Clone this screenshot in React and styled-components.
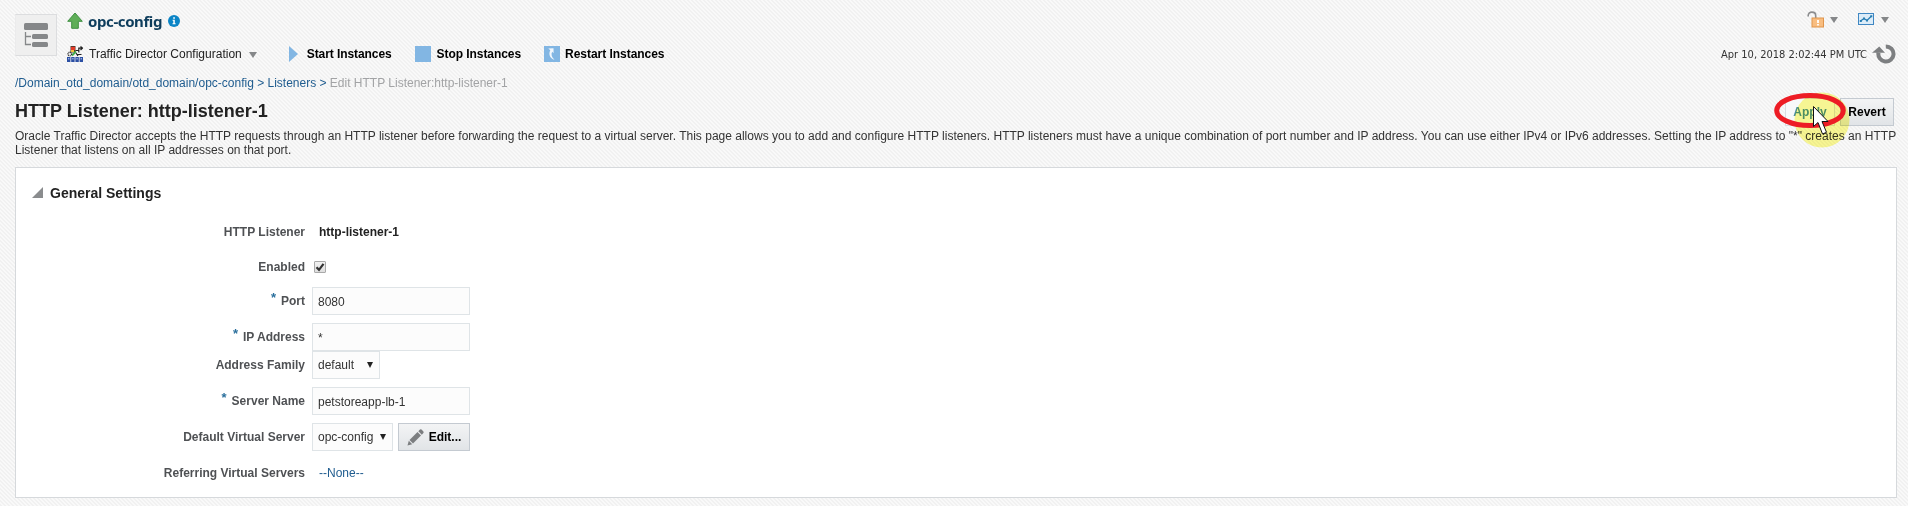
import React from "react";
import styled, { createGlobalStyle, css } from "styled-components";

const Global = createGlobalStyle`
  * { box-sizing: border-box; }
  html, body { margin: 0; height: 100%; }
  body {
    background-color: #f7f7f7;
    background-image: linear-gradient(45deg, #f9f9f9 25%, #f1f1f1 25% 50%, #f9f9f9 50% 75%, #f1f1f1 75%);
    background-size: 4px 4px;
    font-family: "Liberation Sans", Arial, sans-serif;
    font-size: 12px;
    color: #333;
  }
`;

const tracking = css`
  letter-spacing: ${(p) => p.$track || 0}px;
`;

const Page = styled.div`
  width: 1908px;
  height: 506px;
  padding: 0 11px 8px 15px;
  overflow: hidden;
  position: relative;
  display: flex;
  flex-direction: column;
`;

const Header = styled.header`
  display: flex;
  height: 73px;
  padding-top: 14px;
`;

const NavButton = styled.button`
  width: 42px;
  height: 42px;
  padding: 0;
  border: 1px solid #dcdddf;
  border-left-color: #ebebec;
  background: #efefef;
  display: grid;
  place-items: center;
  margin-right: 10px;
`;

const Target = styled.div`
  flex: 1;
  margin-top: -5px;
`;

const TitleRow = styled.div`
  height: 24px;
  display: flex;
  align-items: center;
`;

const TargetName = styled.h1`
  margin: 0 6px 0 5px;
  font: bold 15px "Noto Sans", sans-serif;
  line-height: 24px;
  color: #0e3d5c;
  ${tracking}
`;

const MenuBar = styled.nav`
  display: flex;
  align-items: center;
  height: 20px;
  margin-top: 11px;
`;

const MenuLabel = styled.span`
  margin: 0 7px 0 6px;
  color: #222;
`;

const Action = styled.span`
  display: flex;
  align-items: center;
  gap: ${(p) => p.$gap}px;
  margin-left: ${(p) => p.$left}px;
  font-weight: bold;
  color: #000;
  white-space: nowrap;
  ${tracking}
`;

const Tools = styled.div`
  display: flex;
  flex-direction: column;
  align-items: flex-end;
  margin-top: -6px;
`;

const ToolIcons = styled.div`
  display: flex;
  align-items: center;
  height: 22px;
  padding-right: 8px;
`;

const Stamp = styled.div`
  display: flex;
  align-items: center;
  gap: 5px;
  height: 22px;
  margin-top: 13px;
  padding-right: 1px;
  font: 11px "DejaVu Sans Condensed", "DejaVu Sans", sans-serif;
  color: #333;
`;

const Caret = styled.span`
  border: 4.5px solid transparent;
  border-top: 6px solid #858789;
  border-bottom: 0;
  margin-left: ${(p) => p.$left || 0}px;
  margin-right: ${(p) => p.$right || 0}px;
  position: relative;
  top: 1px;
`;

const Crumbs = styled.div`
  height: 20px;
  line-height: 20px;
  color: #1f5c8f;
  white-space: nowrap;
`;

const Current = styled.span`
  color: #a2a3a5;
`;

const HeadingRow = styled.div`
  display: flex;
  justify-content: space-between;
  height: 36px;
  padding: 5px 3px 0 0;
`;

const Heading = styled.h2`
  margin: 0;
  font-size: 18px;
  line-height: 26px;
  color: #222;
  ${tracking}
`;

const Buttons = styled.div`
  display: flex;
  gap: 5px;
`;

const Button = styled.button`
  height: 28px;
  width: ${(p) => p.$w}px;
  padding: 0;
  border: 1px solid ${(p) => (p.$hot ? "#d9dce0" : "#c4cad1")};
  background: ${(p) => (p.$hot ? "#f8f9fa" : "linear-gradient(#f3f4f5, #e1e4e7)")};
  font: bold 12px "Liberation Sans", Arial, sans-serif;
  color: ${(p) => (p.$hot ? "#4d90a8" : "#000")};
  display: flex;
  align-items: center;
  justify-content: center;
  gap: 5px;
  ${tracking}
`;

const Description = styled.p`
  margin: 0;
  height: 38px;
  line-height: 14px;
  white-space: nowrap;
  color: #333;
  ${tracking}
`;

const Panel = styled.section`
  height: 331px;
  border: 1px solid #d6d9dc;
  background: #fff;
  padding: 15px 16px 0;
`;

const PanelTitle = styled.h3`
  margin: 0;
  display: flex;
  align-items: center;
  gap: 7px;
  height: 20px;
  font-size: 14px;
  color: #222;
`;

const Disclosure = styled.span`
  border-left: 11px solid transparent;
  border-bottom: 11px solid #8a8c8e;
  margin-bottom: 1px;
`;

const Field = styled.div`
  display: grid;
  grid-template-columns: 273px auto;
  column-gap: 7px;
  align-items: center;
  justify-content: start;
  height: 28px;
  margin-top: ${(p) => p.$top}px;
`;

const Label = styled.label`
  text-align: right;
  font-weight: bold;
  color: #4f5154;
`;

const Required = styled.span`
  color: #2a6f9c;
  margin-right: 5px;
  font-size: 13px;
  line-height: 12px;
  position: relative;
  top: -3px;
`;

const box = css`
  height: 28px;
  border: 1px solid #dfe4e7;
  background: #fcfcfc;
  color: #333;
  font: 12px "Liberation Sans", Arial, sans-serif;
`;

const Input = styled.input`
  ${box}
  width: 158px;
  padding: 1px 5px 0;
`;

const Select = styled.div`
  ${box}
  width: ${(p) => p.$w}px;
  padding: 0 6px 0 5px;
  display: flex;
  align-items: center;
  justify-content: space-between;
`;

const SelectArrow = styled.span`
  border: 3px solid transparent;
  border-top: 6px solid #222;
  border-bottom: 0;
`;

const Controls = styled.div`
  display: flex;
  gap: 5px;
`;

const Value = styled.span`
  padding-left: 7px;
  font-weight: ${(p) => (p.$link ? "normal" : "bold")};
  color: ${(p) => (p.$link ? "#1f5c8f" : "#222")};
`;

const Check = styled.span`
  width: 12px;
  height: 12px;
  margin-left: 2px;
  border: 1px solid #a9a9a9;
  background: linear-gradient(#f2f2f2, #dedede);
  border-radius: 1px;
  display: grid;
  place-items: center;
`;

const PointerOverlay = styled.svg`
  position: absolute;
  left: 1768px;
  top: 86px;
  pointer-events: none;
  mix-blend-mode: ${(p) => p.$blend || "normal"};
`;

const HierarchyIcon = () => (
  <svg width="26" height="26" viewBox="0 0 26 26" fill="#858789">
    <rect x="1" y="1" width="24" height="7" rx="1.5" />
    <rect x="9" y="12" width="16" height="5" rx="1.5" />
    <rect x="9" y="20" width="16" height="5" rx="1.5" />
    <path d="M2.5 10v12.5H8M2.5 14.5H8" fill="none" stroke="#858789" strokeWidth="1.3" />
  </svg>
);

const UpArrow = () => (
  <svg width="16" height="18" viewBox="0 0 16 18">
    <path d="M8 1L15.3 9.3H11.3V16.3H4.7V9.3H.7Z" fill="#5fae58" stroke="#3f8f42" strokeLinejoin="round" />
  </svg>
);

const InfoIcon = () => (
  <svg width="12" height="12" viewBox="0 0 12 12">
    <circle cx="6" cy="6" r="6" fill="#0b84c6" />
    <path d="M5.2 2.3h1.7v1.5H5.2zM4.6 4.8h2.2v3.5h.8v1H4.5v-1h.8V5.8h-.7z" fill="#fff" />
  </svg>
);

const TrafficIcon = () => (
  <svg width="16" height="16" viewBox="0 0 16 16">
    <rect x="3.500" y="0" width="5" height="6.500" fill="#5a3a30" />
    <rect x="4" y="1" width="4" height="3" fill="#e23a26" />
    <rect x="4" y="4" width="3" height="2" fill="#f0c23a" />
    <path d="M5 9.500L9 5.500" stroke="#3fae49" strokeWidth="1.800" />
    <circle cx="2.8" cy="8" r="1.8" fill="none" stroke="#333" strokeWidth="1.3" strokeDasharray="1 .6" />
    <path d="M8.500 4.500h3M11.800 6.500V2.200h3.200M10 8.500h4.500M13.500 .5L15.500 2.200 13.500 4M9 7l2 3" fill="none" stroke="#222" strokeWidth="1.2" />
    <g fill="#2b4fa3">
      <rect x="0" y="11" width="3.400" height="5" />
      <rect x="4.200" y="11" width="3.400" height="5" />
      <rect x="8.400" y="11" width="3.400" height="5" />
      <rect x="12.600" y="11" width="3.400" height="5" />
    </g>
    <path d="M1 12.800h1.400M5.200 12.800h1.400M9.400 12.800h1.400M13.600 12.800H15" stroke="#c9d6f2" />
  </svg>
);

const StartIcon = () => (
  <svg width="9" height="16" viewBox="0 0 9 16"><path d="M0 0L9 8 0 16Z" fill="#82b6e3" /></svg>
);

const StopIcon = () => (
  <svg width="16" height="16"><rect width="16" height="16" fill="#82b6e3" /></svg>
);

const RestartIcon = () => (
  <svg width="16" height="16" viewBox="0 0 16 16">
    <rect width="16" height="16" fill="#82b6e3" />
    <path d="M4.300 2.600L9.500 2.200 9.600 7.200 8.200 5.800C6.800 8 7.600 11.500 10.500 13.700 5.900 12.500 4.200 8 6.300 4.200Z" fill="#f2f7fc" />
  </svg>
);

const LockIcon = () => (
  <svg width="17" height="17" viewBox="0 0 17 17">
    <path d="M1.200 5.500V4.500C1.200 0 8.700 0 8.700 4.500V7" fill="none" stroke="#8c8d8f" strokeWidth="1.600" />
    <rect x="5" y="7" width="11.500" height="9" fill="#f8bd80" stroke="#e0954c" />
    <path d="M11 9v3M11 13v1.500" stroke="#fff" strokeWidth="1.800" />
  </svg>
);

const ChartIcon = () => (
  <svg width="16" height="12" viewBox="0 0 16 12">
    <rect x=".5" y=".5" width="15" height="11" fill="#dcecf8" stroke="#3f87c3" />
    <path d="M2.500 8L6 5.500 9 7.500 13.500 3" fill="none" stroke="#267db3" strokeWidth="1.300" />
    <path d="M1.800 7h2v2h-2zM5 4.500h2v2H5zM8 6.500h2v2H8zM12.300 2.300h2v2h-2z" fill="#267db3" />
  </svg>
);

const RefreshIcon = () => (
  <svg width="24" height="20" viewBox="0 0 24 20">
    <path d="M13.800 2.400A7.600 7.600 0 1 1 6.500 8.500" fill="none" stroke="#7d7f81" strokeWidth="4" />
    <path d="M0 8.800L7.300 2.500 13 8.800Z" fill="#7d7f81" />
  </svg>
);

const PencilIcon = () => (
  <svg width="17" height="17" viewBox="0 0 17 17" fill="#7c7e80">
    <path d="M.5 16.500L1.800 11.800 5.200 15.200Z" />
    <path d="M2.500 11L10.500 3 14 6.500 6 14.500Z" />
    <path d="M11.300 2.200L13 .6Q13.800 0 14.500 .6L16.400 2.500Q17 3.200 16.400 4L14.800 5.700Z" />
  </svg>
);

const CheckMark = () => (
  <svg width="10" height="10" viewBox="0 0 10 10">
    <path d="M1.500 5.200L4 7.800 8.500 1.800" fill="none" stroke="#333" strokeWidth="2.200" />
  </svg>
);

const Pointer = () => (
  <>
    <PointerOverlay $blend="multiply" width="92" height="64" viewBox="0 0 92 64">
      <circle cx="54" cy="34" r="27.500" fill="#fdfb96" />
    </PointerOverlay>
    <PointerOverlay width="92" height="64" viewBox="0 0 92 64">
      <ellipse cx="42" cy="24.500" rx="33.300" ry="15" fill="none" stroke="#ed1c24" strokeWidth="5" />
      <path d="M45.500 20.500V40.500L50 36.500 54.500 48 58.500 46.300 54 35.500H60Z" fill="#fff" stroke="#111" strokeWidth="1" />
    </PointerOverlay>
  </>
);

export default function App() {
  return (
    <>
      <Global />
      <Page>
        <Header>
          <NavButton><HierarchyIcon /></NavButton>
          <Target>
            <TitleRow>
              <UpArrow />
              <TargetName $track={-0.4}>opc-config</TargetName>
              <InfoIcon />
            </TitleRow>
            <MenuBar>
              <TrafficIcon />
              <MenuLabel>Traffic Director Configuration</MenuLabel>
              <Caret />
              <Action $left={32} $gap={9} $track={-0.08}><StartIcon />Start Instances</Action>
              <Action $left={23} $gap={6} $track={-0.06}><StopIcon />Stop Instances</Action>
              <Action $left={23} $gap={5} $track={-0.04}><RestartIcon />Restart Instances</Action>
            </MenuBar>
          </Target>
          <Tools>
            <ToolIcons>
              <LockIcon />
              <Caret $left={6} $right={20} />
              <ChartIcon />
              <Caret $left={7} />
            </ToolIcons>
            <Stamp>Apr 10, 2018 2:02:44 PM UTC<RefreshIcon /></Stamp>
          </Tools>
        </Header>
        <Crumbs>/Domain_otd_domain/otd_domain/opc-config &gt; Listeners &gt; <Current>Edit HTTP Listener:http-listener-1</Current></Crumbs>
        <HeadingRow>
          <Heading>HTTP Listener: http-listener-1</Heading>
          <Buttons>
            <Button $w={50} $hot>Apply</Button>
            <Button $w={54}>Revert</Button>
          </Buttons>
        </HeadingRow>
        <Description $track={0.006}>
          Oracle Traffic Director accepts the HTTP requests through an HTTP listener before forwarding the request to a virtual server. This page allows you to add and configure HTTP listeners. HTTP listeners must have a unique combination of port number and IP address. You can use either IPv4 or IPv6 addresses. Setting the IP address to "*" creates an HTTP<br />
          Listener that listens on all IP addresses on that port.
        </Description>
        <Panel>
          <PanelTitle><Disclosure />General Settings</PanelTitle>
          <Field $top={15}><Label>HTTP Listener</Label><Value>http-listener-1</Value></Field>
          <Field $top={7}><Label>Enabled</Label><Check><CheckMark /></Check></Field>
          <Field $top={6}><Label><Required>*</Required>Port</Label><Input defaultValue="8080" /></Field>
          <Field $top={8}><Label><Required>*</Required>IP Address</Label><Input defaultValue="*" /></Field>
          <Field $top={0}><Label>Address Family</Label><Select $w={68}>default<SelectArrow /></Select></Field>
          <Field $top={8}><Label><Required>*</Required>Server Name</Label><Input defaultValue="petstoreapp-lb-1" /></Field>
          <Field $top={8}>
            <Label>Default Virtual Server</Label>
            <Controls>
              <Select $w={81}>opc-config<SelectArrow /></Select>
              <Button $w={72}><PencilIcon />Edit...</Button>
            </Controls>
          </Field>
          <Field $top={8}><Label>Referring Virtual Servers</Label><Value $link>--None--</Value></Field>
        </Panel>
        <Pointer />
      </Page>
    </>
  );
}
